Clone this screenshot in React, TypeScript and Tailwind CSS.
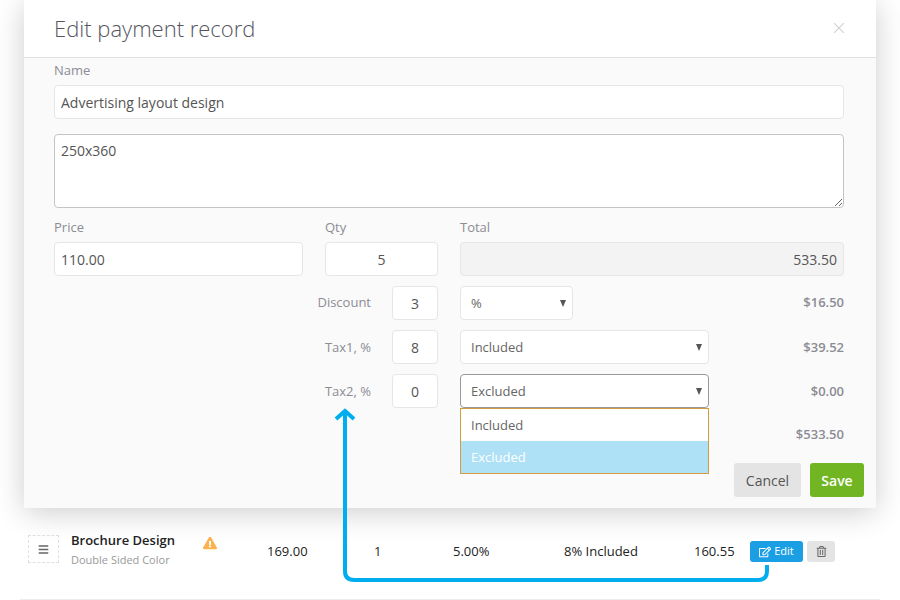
import { FaBars, FaExclamationTriangle, FaRegEdit, FaRegTrashAlt } from "react-icons/fa";
import type { FC } from "react";

const inputClass =
  "h-[34px] rounded-[4px] border border-[#e6e6e6] px-[6px] text-[14px] text-[#555] outline-none";

const Caret: FC = () => (
  <span className="ml-auto h-0 w-0 border-x-[3.5px] border-t-[7px] border-x-transparent border-t-[#555]" />
);

interface SelectBoxProps {
  value: string;
  width: string;
  active?: boolean;
}

const SelectBox: FC<SelectBoxProps> = ({ value, width, active }) => (
  <div
    className={`flex h-[34px] items-center rounded-[4px] border bg-white pl-[10px] pr-[6px] text-[13px] text-[#666] ${width} ${
      active ? "border-[#999]" : "border-[#e6e6e6]"
    }`}
  >
    <span className="pt-[1px]">{value}</span>
    <Caret />
  </div>
);

interface TaxRowProps {
  label: string;
  qty: string;
  select: string;
  selectWidth: string;
  amount: string;
  active?: boolean;
  lowered?: boolean;
}

const TaxRow: FC<TaxRowProps> = ({ label, qty, select, selectWidth, amount, active, lowered }) => (
  <div className="flex h-[34px] items-center">
    <div className={`w-[317px] text-right text-[13px] text-[#8c8c94] ${lowered ? "pt-[2px]" : ""}`}>{label}</div>
    <input
      readOnly
      value={qty}
      className={`${inputClass} ml-[21px] w-[46px] bg-white text-center`}
    />
    <div className="ml-[22px] w-[249px]">
      <SelectBox value={select} width={selectWidth} active={active} />
    </div>
    <div className={`flex-1 text-right text-[13px] font-semibold text-[#8c8c94] ${lowered ? "pt-[2px]" : ""}`}>{amount}</div>
  </div>
);

export default function App() {
  return (
    <div className="relative h-[600px] w-[900px] overflow-hidden bg-white font-['Open_Sans',sans-serif]">
      <div className="relative z-10 ml-[24px] flex h-[508px] w-[852px] flex-col bg-[#fafafa] shadow-[0_4px_28px_rgba(0,0,0,0.2)]">
        <div className="flex h-[58px] items-start justify-between border-b border-[#e0e0e0] bg-white px-[30px]">
          <h1 className="mt-[12px] text-[22px] leading-[32px] font-light text-[#555560]">Edit payment record</h1>
          <svg className="mt-[23px] mr-[2px] h-[10px] w-[10px] text-[#d0d0d0]" viewBox="0 0 10 10" fill="none" stroke="currentColor" strokeWidth="1.1">
            <path d="M0 0 L10 10 M10 0 L0 10" />
          </svg>
        </div>

        <div className="flex flex-1 flex-col pl-[30px] pr-[32px]">
          <label className="mt-[3px] text-[13px] leading-[18px] text-[#8c8c94]">Name</label>
          <input readOnly value="Advertising layout design" className={`${inputClass} mt-[6px] w-full bg-white`} />
          <textarea
            readOnly
            value="250x360"
            className="mt-[15px] block h-[74px] w-full rounded-[4px] border border-[#c4c4c4] bg-white px-[6px] py-[5px] text-[14px] text-[#555] outline-none"
          />

          <div className="mt-[10px] flex">
            <div className="w-[249px]">
              <label className="block text-[13px] leading-[18px] text-[#8c8c94]">Price</label>
              <input readOnly value="110.00" className={`${inputClass} mt-[6px] w-full bg-white`} />
            </div>
            <div className="ml-[22px] w-[113px]">
              <label className="block text-[13px] leading-[18px] text-[#8c8c94]">Qty</label>
              <input readOnly value="5" className={`${inputClass} mt-[6px] w-full bg-white text-center`} />
            </div>
            <div className="ml-[22px] flex-1">
              <label className="block text-[13px] leading-[18px] text-[#8c8c94]">Total</label>
              <input readOnly value="533.50" className={`${inputClass} mt-[6px] w-full bg-[#f3f3f3] text-right`} />
            </div>
          </div>

          <div className="mt-[10px] flex flex-col gap-[10px]">
            <TaxRow label="Discount" qty="3" select="%" selectWidth="w-[113px]" amount="$16.50" />
            <TaxRow label="Tax1, %" qty="8" select="Included" selectWidth="w-full" amount="$39.52" lowered />
            <TaxRow label="Tax2, %" qty="0" select="Excluded" selectWidth="w-full" amount="$0.00" active lowered />
          </div>

          <div className="relative mt-[17px] text-right text-[13px] leading-[18px] font-semibold text-[#8c8c94]">
            $533.50
            <div className="absolute left-[406px] top-[-17px] w-[249px] border border-[#d39c3f] bg-white text-left text-[13px] font-normal">
              <div className="flex h-[32px] items-center pl-[10px] text-[#666]">Included</div>
              <div className="flex h-[32px] items-center bg-[#aee0f6] pl-[10px] text-white">Excluded</div>
            </div>
          </div>

          <div className="mt-[20px] mr-[-20px] flex justify-end gap-[9px]">
            <button type="button" className="h-[34px] w-[67px] rounded-[3px] bg-[#e4e4e4] text-[14px] text-[#555]">
              Cancel
            </button>
            <button type="button" className="h-[34px] w-[54px] rounded-[3px] bg-[#72b522] text-[14px] font-semibold text-white">
              Save
            </button>
          </div>
        </div>
      </div>

      <div className="mx-[20px] flex h-[92px] items-start border-b border-[#ececec] pl-[8px]">
        <div className="mt-[27px] flex h-[28px] w-[31px] items-center justify-center border border-dashed border-[#e0e0e0] text-[#666]">
          <FaBars className="h-[11px] w-[11px]" />
        </div>
        <div className="ml-[12px] mt-[23px] w-[132px]">
          <div className="text-[13px] leading-[18px] font-semibold text-[#222]">Brochure Design</div>
          <div className="mt-[3px] text-[11px] leading-[16px] text-[#999]">Double Sided Color</div>
        </div>
        <FaExclamationTriangle className="mt-[28px] h-[14px] w-[14px] text-[#fcb04e]" />
        <div className="mt-[34px] flex text-[13px] leading-[18px] text-[#222]">
          <span className="ml-[50px] w-[107px]">169.00</span>
          <span className="w-[79px]">1</span>
          <span className="w-[111px]">5.00%</span>
          <span className="w-[130px]">8% Included</span>
          <span className="w-[56px]">160.55</span>
        </div>
        <div className="mt-[33px] flex gap-[4px]">
          <button type="button" className="flex h-[21px] w-[53px] items-center justify-center gap-[3px] rounded-[3px] bg-[#1a9ee4] text-[11px] text-white">
            <FaRegEdit className="h-[12px] w-[12px]" />
            Edit
          </button>
          <button type="button" className="flex h-[21px] w-[28px] items-center justify-center rounded-[3px] bg-[#e4e4e4] text-[#666]">
            <FaRegTrashAlt className="h-[11px] w-[11px]" />
          </button>
        </div>
      </div>

      <svg className="pointer-events-none absolute left-0 top-0 z-20 h-[600px] w-[900px]" viewBox="0 0 900 600" fill="none">
        <path
          d="M767 565 V571 Q767 580 758 580 H354 Q345 580 345 571 V412 M336 419 L345 411 L354 419"
          stroke="#00aeef"
          strokeWidth="4"
        />
      </svg>
    </div>
  );
}
